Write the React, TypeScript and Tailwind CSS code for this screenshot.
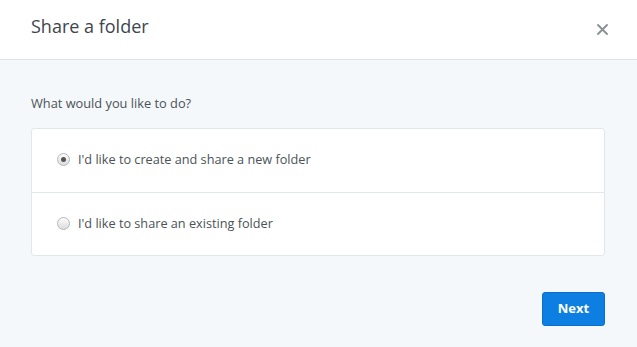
export default function App() {
  const options = [
    { label: "I'd like to create and share a new folder", checked: true },
    { label: "I'd like to share an existing folder", checked: false },
  ];
  return (
    <div className="w-[637px] h-[347px] flex flex-col bg-[#f5f8fa] font-['Open_Sans',sans-serif]">
      <div className="h-[60px] shrink-0 bg-white border-b border-[#e1e5e8] flex items-center justify-between pl-[31px] pr-[29px]">
        <h1 className="text-[18px] text-[#3d464d] -mt-[6px]">Share a folder</h1>
        <button className="text-[#8a8f94] -mt-[1px]">
          <svg width="11" height="11" viewBox="0 0 11 11">
            <path d="M1 1L10 10M10 1L1 10" stroke="currentColor" strokeWidth="1.8" strokeLinecap="round" />
          </svg>
        </button>
      </div>
      <div className="flex-1 flex flex-col pl-[31px] pr-[32px] pt-[34px]">
        <p className="text-[12.8px] text-[#4b5257] leading-[18px]">What would you like to do?</p>
        <div className="mt-[16px] bg-white border border-[#e3e7ea] rounded-[3px] flex flex-col">
          {options.map((o, i) => (
            <label
              key={o.label}
              className={`h-[63px] flex items-center pl-[25px] gap-[8px] ${i > 0 ? "border-t border-[#e3e7ea]" : ""}`}
            >
              <span className="w-[13px] h-[13px] rounded-full border border-[#b4b8bb] bg-gradient-to-b from-[#fdfdfd] to-[#dcdcdc] flex items-center justify-center -mt-[2px]">
                {o.checked && <span className="w-[5px] h-[5px] rounded-full bg-[#555]" />}
              </span>
              <span className="text-[12.7px] text-[#4b5257] -mt-[1px]">{o.label}</span>
            </label>
          ))}
        </div>
        <div className="flex justify-end mt-[36px]">
          <button className="w-[63px] h-[34px] rounded-[3px] bg-[#0d7fe2] border border-[#0a6fc9] text-white text-[13px] font-bold">
            Next
          </button>
        </div>
      </div>
    </div>
  );
}
